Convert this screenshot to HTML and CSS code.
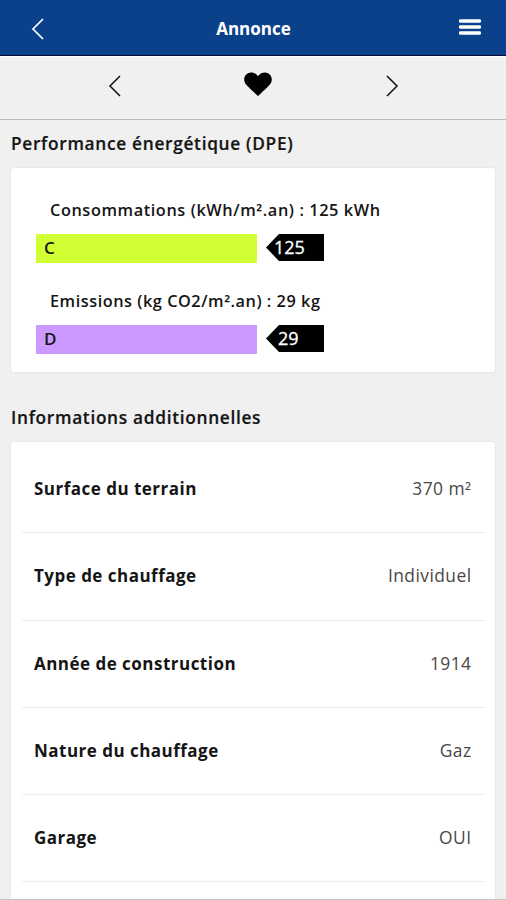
FILE: index.html
```html
<!DOCTYPE html>
<html lang="fr">
<head>
<meta charset="utf-8">
<title>Annonce</title>
<link rel="stylesheet" href="styles.css">
</head>
<body>
<div class="screen">
  <header class="topbar">
    <svg class="back" viewBox="0 0 14 22"><path d="M12 1 2 11l10 10"/></svg>
    <h1 class="title">Annonce</h1>
    <svg class="menu" viewBox="0 0 22 16"><path d="M1.5 2h19M1.5 8h19M1.5 14h19"/></svg>
  </header>
  <nav class="pager">
    <svg class="arrow" viewBox="0 0 14 22"><path d="M12 1 2 11l10 10"/></svg>
    <svg class="heart" viewBox="0 0 28 25"><path d="M14 24.2 C12 22 7 17.7 3.2 13.8 C.8 11.3.2 9.5.2 7.3 C.2 3.3 3.3.4 7.1.4 C10.1.4 12.6 1.8 14 4.3 C15.4 1.8 17.9.4 20.9.4 C24.7.4 27.8 3.3 27.8 7.3 C27.8 9.5 27.2 11.3 24.8 13.8 C21 17.7 16 22 14 24.2Z"/></svg>
    <svg class="arrow" viewBox="0 0 14 22"><path d="M2 1l10 10L2 21"/></svg>
  </nav>
  <main class="content">
    <h2 class="heading heading-dpe">Performance énergétique (DPE)</h2>
    <section class="card energy">
      <div class="metric">
        <p class="caption cons">Consommations (kWh/m<span class="sq">²</span>.an) : 125 kWh</p>
        <div class="scale"><div class="bar lime">C</div><div class="tag"><span class="tag-body wide">125</span></div></div>
      </div>
      <div class="metric">
        <p class="caption emis">Emissions (kg CO2/m<span class="sq">²</span>.an) : 29 kg</p>
        <div class="scale"><div class="bar violet">D</div><div class="tag"><span class="tag-body">29</span></div></div>
      </div>
    </section>
    <h2 class="heading heading-info">Informations additionnelles</h2>
    <dl class="card details">
      <div class="row"><dt>Surface du terrain</dt><dd>370 m<span class="sq">²</span></dd></div>
      <div class="row"><dt>Type de chauffage</dt><dd>Individuel</dd></div>
      <div class="row"><dt>Année de construction</dt><dd>1914</dd></div>
      <div class="row"><dt>Nature du chauffage</dt><dd>Gaz</dd></div>
      <div class="row"><dt>Garage</dt><dd>OUI</dd></div>
    </dl>
  </main>
</div>
</body>
</html>
```

FILE: styles.css
```css
* { box-sizing: border-box; }
body { margin: 0; font-family: "Open Sans", "Noto Sans", sans-serif; color: #151515; }
h1, h2, p, dl, dt, dd { margin: 0; }
svg { display: block; fill: none; }
.screen { height: 900px; overflow: hidden; display: flex; flex-direction: column; background: #f0f0f0; border-bottom: 1px solid #c4c4c4; }
.topbar { height: 56px; flex: none; display: grid; grid-template-columns: 60px 1fr 60px; align-items: center; background: #0b418b; border-bottom: 1px solid #080b35; }
.back { width: 14px; height: 22px; margin: 2px 0 0 31px; stroke: #fff; stroke-width: 1.7; }
.title { text-align: center; font-size: 17px; line-height: 24px; font-weight: 700; color: #fff; padding: 2px 0 0 1px; }
.menu { width: 22px; height: 16px; margin: -2px 0 0 13px; stroke: #fff; stroke-width: 3.4; stroke-linecap: round; }
.pager { height: 64px; flex: none; display: flex; justify-content: space-between; padding: 19px 107px 0 108px; border-top: 1px solid #fff; border-bottom: 1px solid #b8b8b8; }
.arrow { width: 14px; height: 22px; margin-top: -1px; stroke: #111; stroke-width: 1.5; }
.heart { width: 28px; height: 25px; margin: -4px -4px 0 4px; fill: #000; }
.content { flex: 1; min-height: 0; padding: 0 11px; display: flex; flex-direction: column; }
.heading { flex: none; font-size: 17.3px; line-height: 24px; font-weight: 600; letter-spacing: .69px; -webkit-text-stroke: .2px #151515; }
.heading-dpe { margin: 12px 0 12px; }
.heading-info { margin: 34px 0 12px; }
.card { flex: none; background: #fff; border-radius: 3px; box-shadow: 0 0 2px rgba(0,0,0,.12); }
.energy { height: 204px; padding: 30px 24px 0 25px; display: flex; flex-direction: column; gap: 26px; }
.caption { height: 24px; padding-left: 14px; font-size: 16.3px; line-height: 24px; font-weight: 600; letter-spacing: .59px; white-space: nowrap; }
.emis { letter-spacing: .53px; }
.sq { display: inline-block; line-height: 1; transform: translateY(1.5px); }
.scale { display: flex; align-items: flex-start; gap: 9px; margin-top: 12px; height: 29px; }
.bar { width: 221px; height: 29px; padding-left: 8px; font-size: 17px; line-height: 27px; font-weight: 600; }
.lime { background: #d0ff33; }
.violet { background: #cb99ff; }
.tag { width: 58px; height: 27px; background: #000; clip-path: polygon(0 50%, 13px 0, 100% 0, 100% 100%, 13px 100%); }
.tag-body { display: block; padding-left: 12px; color: #fff; font-size: 18px; line-height: 27px; font-weight: 500; -webkit-text-stroke: .3px #fff; }
.wide { padding-left: 8px; }
.details { height: 480px; padding: 4px 10px 0 11px; }
.row { height: 87.3px; display: flex; justify-content: space-between; align-items: center; padding: 0 13.5px 0 12px; border-bottom: 1.5px solid #eee; font-size: 17px; line-height: 24px; }
.row dt { font-weight: 700; letter-spacing: .48px; }
.row dd { margin-top: -2px; font-size: 17.4px; font-weight: 400; letter-spacing: .45px; color: #484848; }
```
